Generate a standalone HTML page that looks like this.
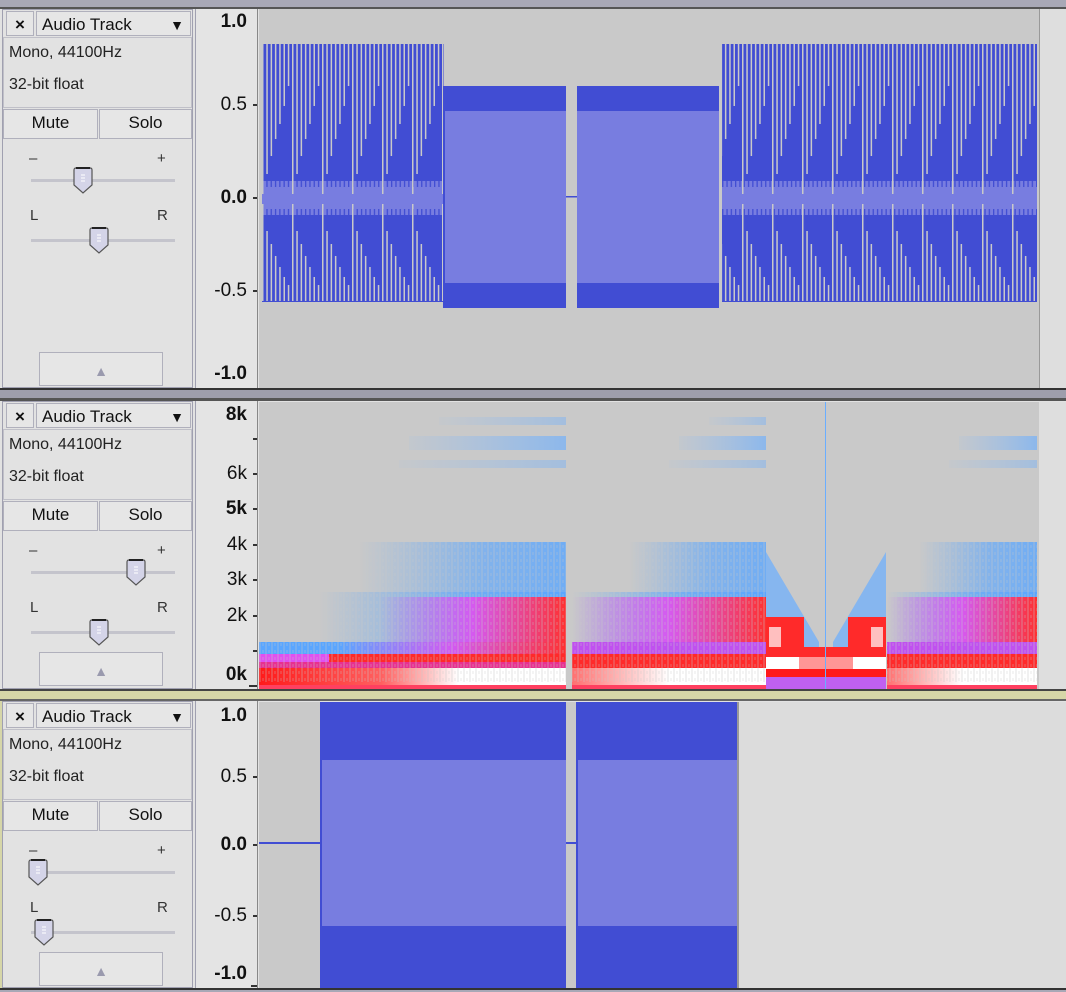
<!DOCTYPE html>
<html><head><meta charset="utf-8"><style>
*{margin:0;padding:0;box-sizing:border-box}
body{width:1066px;height:992px;background:#a8a8b6;position:relative;overflow:hidden;font-family:"Liberation Sans",sans-serif;color:#111}
.abs{position:absolute}
.panel{position:absolute;left:2px;width:191px;background:#e2e2e2;border:1px solid #a0a0b0}
.btn{position:absolute;background:#e6e6e6;border:1px solid #b0b0bc;font-size:17px;text-align:center;line-height:26px}
.info{position:absolute;left:6px;font-size:16px;color:#222}
.ibox{position:absolute;left:0;top:27px;width:189px;height:71px;border:1px solid #c0c0c8}
.ruler{position:absolute;left:195px;width:63px;background:#e4e4e4;border-left:1px solid #a0a0b0;border-right:1px solid #888}
.lab{position:absolute;right:10px;font-size:19px;line-height:20px}
.b{font-weight:bold}
.tick{position:absolute;right:0;width:4px;height:2px;background:#333}
.sl{position:absolute;left:28px;width:144px;height:3px;background:#c4c4cc}
.sym{position:absolute;font-size:15px;color:#333}
</style></head><body>
<div class="abs" style="left:0;top:7px;width:1066px;height:2px;background:#555"></div>

<!-- TRACK 1 -->
<div class="abs" style="left:0;top:9px;width:1066px;height:379px;background:#e2e2e2"></div>
<div class="panel" style="top:9px;height:379px">
 <div class="btn" style="left:3px;top:1px;width:28px;height:25px;font-weight:bold">×</div>
 <div class="btn" style="left:33px;top:1px;width:155px;height:25px;text-align:left;padding-left:5px">Audio Track<span style="position:absolute;right:6px;top:0;font-size:14px">▼</span></div>
 <div class="ibox"></div>
 <div class="info" style="top:34px">Mono, 44100Hz</div>
 <div class="info" style="top:66px">32-bit float</div>
 <div class="btn" style="left:0;top:99px;width:95px;height:30px">Mute</div>
 <div class="btn" style="left:96px;top:99px;width:93px;height:30px">Solo</div>
 <div class="sym" style="left:26px;top:140px">–</div><div class="sym" style="left:154px;top:140px">+</div>
 <div class="sl" style="top:169px"></div>
 <svg class="abs" style="left:69px;top:157px" width="22" height="28"><path d="M2 3 Q2 1 4 1 H18 Q20 1 20 3 V18 L11 26 L2 18 Z" fill="#d4d4e8" stroke="#555" stroke-width="1.2"/><path d="M4 1 H18" stroke="#222" stroke-width="2"/><path d="M9 8h4M9 11h4M9 14h4" stroke="#fff"/></svg>
 <div class="sym" style="left:27px;top:197px">L</div><div class="sym" style="left:154px;top:197px">R</div>
 <div class="sl" style="top:229px"></div>
 <svg class="abs" style="left:85px;top:217px" width="22" height="28"><path d="M2 3 Q2 1 4 1 H18 Q20 1 20 3 V18 L11 26 L2 18 Z" fill="#d4d4e8" stroke="#555" stroke-width="1.2"/><path d="M4 1 H18" stroke="#222" stroke-width="2"/><path d="M9 8h4M9 11h4M9 14h4" stroke="#fff"/></svg>
 <div class="btn" style="left:36px;top:342px;width:124px;height:34px;color:#9a9aae;font-size:14px;line-height:36px">▲</div>
</div>
<div class="ruler" style="top:9px;height:379px">
 <div class="lab b" style="top:3px">1.0</div>
 <div class="lab" style="top:86px">0.5</div><div class="tick" style="top:95px"></div>
 <div class="lab b" style="top:179px">0.0</div><div class="tick" style="top:188px"></div>
 <div class="lab" style="top:272px">-0.5</div><div class="tick" style="top:281px"></div>
 <div class="lab b" style="top:355px">-1.0</div>
</div>
<svg class="abs" style="left:259px;top:9px" width="807" height="379">
 <defs>
  <pattern id="pz" patternUnits="userSpaceOnUse" x="3" y="0" width="30" height="379">
   <g fill="#c9c9c9">
    <rect x="0" y="35" width="1.5" height="150"/><rect x="4.3" y="35" width="1.5" height="130"/><rect x="8.6" y="35" width="1.5" height="112"/><rect x="12.9" y="35" width="1.5" height="95"/><rect x="17.2" y="35" width="1.5" height="80"/><rect x="21.5" y="35" width="1.5" height="62"/><rect x="25.8" y="35" width="1.5" height="42"/>
    <rect x="0" y="195" width="1.5" height="97"/><rect x="4.3" y="222" width="1.5" height="70"/><rect x="8.6" y="235" width="1.5" height="57"/><rect x="12.9" y="247" width="1.5" height="45"/><rect x="17.2" y="258" width="1.5" height="34"/><rect x="21.5" y="268" width="1.5" height="24"/><rect x="25.8" y="276" width="1.5" height="16"/>
   </g>
  </pattern>
  <pattern id="pc" patternUnits="userSpaceOnUse" x="3" y="0" width="4.3" height="379">
   <rect x="0" y="172" width="1.3" height="6" fill="#414dd3"/><rect x="0" y="200" width="1.3" height="6" fill="#414dd3"/>
  </pattern>
 </defs>
 <rect width="780" height="379" fill="#c9c9c9"/>
 <rect x="781" width="26" height="379" fill="#dedede"/>
 <rect x="780" width="1" height="379" fill="#999"/>
 <rect x="3" y="35" width="182" height="258" fill="#414dd3"/>
 <rect x="3" y="172" width="182" height="34" fill="#787de0"/>
 <rect x="3" y="0" width="182" height="379" fill="url(#pc)"/>
 <rect x="3" y="0" width="182" height="379" fill="url(#pz)"/>
 <rect x="463" y="35" width="315" height="258" fill="#414dd3"/>
 <rect x="463" y="172" width="315" height="34" fill="#787de0"/>
 <rect x="463" y="0" width="315" height="379" fill="url(#pc)"/>
 <rect x="463" y="0" width="315" height="379" fill="url(#pz)"/>
 <rect x="184" y="77" width="123" height="222" fill="#414dd3"/>
 <rect x="186" y="102" width="121" height="172" fill="#787de0"/>
 <rect x="318" y="77" width="142" height="222" fill="#414dd3"/>
 <rect x="318" y="102" width="142" height="172" fill="#787de0"/>
 <rect x="307" y="187" width="11" height="1.5" fill="#414dd3"/>
</svg>

<div class="abs" style="left:0;top:388px;width:1066px;height:2px;background:#333"></div>
<div class="abs" style="left:0;top:390px;width:1066px;height:8px;background:#9e9eac"></div>
<div class="abs" style="left:0;top:398px;width:1066px;height:3px;background:#555"></div>

<!-- TRACK 2 -->
<div class="abs" style="left:0;top:401px;width:1066px;height:288px;background:#e2e2e2"></div>
<div class="panel" style="top:401px;height:288px">
 <div class="btn" style="left:3px;top:1px;width:28px;height:25px;font-weight:bold">×</div>
 <div class="btn" style="left:33px;top:1px;width:155px;height:25px;text-align:left;padding-left:5px">Audio Track<span style="position:absolute;right:6px;top:0;font-size:14px">▼</span></div>
 <div class="ibox"></div>
 <div class="info" style="top:34px">Mono, 44100Hz</div>
 <div class="info" style="top:66px">32-bit float</div>
 <div class="btn" style="left:0;top:99px;width:95px;height:30px">Mute</div>
 <div class="btn" style="left:96px;top:99px;width:93px;height:30px">Solo</div>
 <div class="sym" style="left:26px;top:140px">–</div><div class="sym" style="left:154px;top:140px">+</div>
 <div class="sl" style="top:169px"></div>
 <svg class="abs" style="left:122px;top:157px" width="22" height="28"><path d="M2 3 Q2 1 4 1 H18 Q20 1 20 3 V18 L11 26 L2 18 Z" fill="#d4d4e8" stroke="#555" stroke-width="1.2"/><path d="M4 1 H18" stroke="#222" stroke-width="2"/><path d="M9 8h4M9 11h4M9 14h4" stroke="#fff"/></svg>
 <div class="sym" style="left:27px;top:197px">L</div><div class="sym" style="left:154px;top:197px">R</div>
 <div class="sl" style="top:229px"></div>
 <svg class="abs" style="left:85px;top:217px" width="22" height="28"><path d="M2 3 Q2 1 4 1 H18 Q20 1 20 3 V18 L11 26 L2 18 Z" fill="#d4d4e8" stroke="#555" stroke-width="1.2"/><path d="M4 1 H18" stroke="#222" stroke-width="2"/><path d="M9 8h4M9 11h4M9 14h4" stroke="#fff"/></svg>
 <div class="btn" style="left:36px;top:250px;width:124px;height:34px;color:#9a9aae;font-size:14px;line-height:36px">▲</div>
</div>
<div class="ruler" style="top:401px;height:288px">
 <div class="lab b" style="top:4px">8k</div>
 <div class="tick" style="top:37px"></div>
 <div class="lab" style="top:63px">6k</div><div class="tick" style="top:72px"></div>
 <div class="lab b" style="top:98px">5k</div><div class="tick" style="top:107px"></div>
 <div class="lab" style="top:134px">4k</div><div class="tick" style="top:143px"></div>
 <div class="lab" style="top:169px">3k</div><div class="tick" style="top:178px"></div>
 <div class="lab" style="top:205px">2k</div><div class="tick" style="top:214px"></div>
 <div class="tick" style="top:249px"></div>
 <div class="lab b" style="top:264px">0k</div><div class="tick" style="top:284px;width:8px"></div>
</div>
<svg class="abs" style="left:259px;top:402px" width="807" height="287">
 <defs>
  <linearGradient id="fadeL" x1="0" x2="1"><stop offset="0" stop-color="#5aa6ff" stop-opacity="0"/><stop offset="0.6" stop-color="#5aa6ff" stop-opacity="0.8"/><stop offset="1" stop-color="#5aa6ff"/></linearGradient>
  <linearGradient id="magL" x1="0" x2="1"><stop offset="0" stop-color="#e050f0" stop-opacity="0"/><stop offset="0.5" stop-color="#e050f0" stop-opacity="0.9"/><stop offset="1" stop-color="#ff3030"/></linearGradient>
  <linearGradient id="rw" x1="0" x2="1"><stop offset="0" stop-color="#ff1a1a"/><stop offset="0.4" stop-color="#ff6060"/><stop offset="0.65" stop-color="#fff"/><stop offset="1" stop-color="#fff"/></linearGradient>
  <linearGradient id="rw2" x1="0" x2="1"><stop offset="0" stop-color="#ff7070"/><stop offset="0.5" stop-color="#fff"/><stop offset="1" stop-color="#fff"/></linearGradient>
  <linearGradient id="bl" x1="0" x2="1"><stop offset="0" stop-color="#7fb8ff" stop-opacity="0.1"/><stop offset="1" stop-color="#6aaeff" stop-opacity="0.8"/></linearGradient>
  <pattern id="nz" patternUnits="userSpaceOnUse" width="6" height="7"><rect width="2" height="7" fill="#c9c9c9" opacity="0.25"/><rect x="3" y="3" width="2" height="3" fill="#c9c9c9" opacity="0.2"/></pattern>
 </defs>
 <rect width="780" height="287" fill="#c9c9c9"/>
 <rect x="780" width="27" height="287" fill="#dedede"/>
 <rect x="180" y="15" width="127" height="8" fill="url(#bl)" opacity="0.5"/>
 <rect x="150" y="34" width="157" height="14" fill="url(#bl)" opacity="0.8"/>
 <rect x="140" y="58" width="167" height="8" fill="url(#bl)" opacity="0.5"/>
 <rect x="100" y="140" width="207" height="50" fill="url(#fadeL)" opacity="0.8"/>
 <rect x="60" y="190" width="247" height="50" fill="url(#fadeL)"/>
 <rect x="120" y="195" width="187" height="50" fill="url(#magL)"/>
 <rect x="0" y="240" width="307" height="12" fill="#5aa6ff"/>
 <rect x="80" y="240" width="227" height="12" fill="url(#magL)"/>
 <rect x="0" y="252" width="307" height="8" fill="#e050f0"/>
 <rect x="70" y="252" width="237" height="8" fill="#ff2a2a"/>
 <rect x="0" y="260" width="307" height="6" fill="#e83090"/>
 <rect x="0" y="266" width="307" height="17" fill="url(#rw)"/>
 <rect x="0" y="283" width="307" height="4" fill="#ff4060"/>
 <rect x="0" y="130" width="307" height="150" fill="url(#nz)"/>
 <rect x="450" y="15" width="57" height="8" fill="url(#bl)" opacity="0.5"/>
 <rect x="420" y="34" width="87" height="14" fill="url(#bl)" opacity="0.8"/>
 <rect x="410" y="58" width="97" height="8" fill="url(#bl)" opacity="0.5"/>
 <rect x="370" y="140" width="137" height="50" fill="url(#fadeL)" opacity="0.8"/>
 <rect x="313" y="190" width="194" height="50" fill="url(#fadeL)"/>
 <rect x="313" y="195" width="194" height="50" fill="url(#magL)"/>
 <rect x="313" y="240" width="194" height="12" fill="#c050f0"/>
 <rect x="313" y="252" width="194" height="14" fill="#ff2a2a"/>
 <rect x="313" y="266" width="194" height="17" fill="url(#rw2)"/>
 <rect x="313" y="283" width="194" height="4" fill="#ff4060"/>
 <rect x="313" y="130" width="194" height="150" fill="url(#nz)"/>
 <path d="M507 150 L560 240 L560 287 L507 287 Z" fill="#6aaeff" opacity="0.7"/>
 <path d="M627 150 L574 240 L574 287 L627 287 Z" fill="#6aaeff" opacity="0.7"/>
 <rect x="507" y="215" width="38" height="40" fill="#ff2a2a"/>
 <rect x="589" y="215" width="38" height="40" fill="#ff2a2a"/>
 <rect x="510" y="225" width="12" height="30" fill="#fff" opacity="0.7"/>
 <rect x="612" y="225" width="12" height="30" fill="#fff" opacity="0.7"/>
 <rect x="507" y="245" width="120" height="10" fill="#ff2a2a"/>
 <rect x="507" y="255" width="120" height="12" fill="#fff"/>
 <rect x="540" y="255" width="54" height="12" fill="#ff5050" opacity="0.6"/>
 <rect x="507" y="267" width="120" height="8" fill="#ff1a1a"/>
 <rect x="507" y="275" width="120" height="12" fill="#c060f0"/>
 <rect x="566" y="0" width="1" height="287" fill="#6aaeff"/>
 <rect x="700" y="34" width="78" height="14" fill="url(#bl)" opacity="0.8"/>
 <rect x="690" y="58" width="88" height="8" fill="url(#bl)" opacity="0.5"/>
 <rect x="660" y="140" width="118" height="50" fill="url(#fadeL)" opacity="0.8"/>
 <rect x="628" y="190" width="150" height="50" fill="url(#fadeL)"/>
 <rect x="628" y="195" width="150" height="50" fill="url(#magL)"/>
 <rect x="628" y="240" width="150" height="12" fill="#c050f0"/>
 <rect x="628" y="252" width="150" height="14" fill="#ff2a2a"/>
 <rect x="628" y="266" width="150" height="17" fill="url(#rw2)"/>
 <rect x="628" y="283" width="150" height="4" fill="#ff4060"/>
 <rect x="628" y="130" width="150" height="150" fill="url(#nz)"/>
</svg>

<div class="abs" style="left:0;top:689px;width:1066px;height:2px;background:#444"></div>
<div class="abs" style="left:0;top:691px;width:1066px;height:8px;background:#d6d6a8"></div>
<div class="abs" style="left:0;top:699px;width:1066px;height:2px;background:#666"></div>

<!-- TRACK 3 -->
<div class="abs" style="left:0;top:701px;width:1066px;height:287px;background:#e2e2e2;border-left:2px solid #d6d6a8"></div>
<div class="panel" style="top:701px;height:287px">
 <div class="btn" style="left:3px;top:1px;width:28px;height:25px;font-weight:bold">×</div>
 <div class="btn" style="left:33px;top:1px;width:155px;height:25px;text-align:left;padding-left:5px">Audio Track<span style="position:absolute;right:6px;top:0;font-size:14px">▼</span></div>
 <div class="ibox"></div>
 <div class="info" style="top:34px">Mono, 44100Hz</div>
 <div class="info" style="top:66px">32-bit float</div>
 <div class="btn" style="left:0;top:99px;width:95px;height:30px">Mute</div>
 <div class="btn" style="left:96px;top:99px;width:93px;height:30px">Solo</div>
 <div class="sym" style="left:26px;top:140px">–</div><div class="sym" style="left:154px;top:140px">+</div>
 <div class="sl" style="top:169px"></div>
 <svg class="abs" style="left:24px;top:157px" width="22" height="28"><path d="M2 3 Q2 1 4 1 H18 Q20 1 20 3 V18 L11 26 L2 18 Z" fill="#d4d4e8" stroke="#555" stroke-width="1.2"/><path d="M4 1 H18" stroke="#222" stroke-width="2"/><path d="M9 8h4M9 11h4M9 14h4" stroke="#fff"/></svg>
 <div class="sym" style="left:27px;top:197px">L</div><div class="sym" style="left:154px;top:197px">R</div>
 <div class="sl" style="top:229px"></div>
 <svg class="abs" style="left:30px;top:217px" width="22" height="28"><path d="M2 3 Q2 1 4 1 H18 Q20 1 20 3 V18 L11 26 L2 18 Z" fill="#d4d4e8" stroke="#555" stroke-width="1.2"/><path d="M4 1 H18" stroke="#222" stroke-width="2"/><path d="M9 8h4M9 11h4M9 14h4" stroke="#fff"/></svg>
 <div class="btn" style="left:36px;top:250px;width:124px;height:34px;color:#9a9aae;font-size:14px;line-height:36px">▲</div>
</div>
<div class="ruler" style="top:701px;height:287px">
 <div class="lab b" style="top:5px">1.0</div>
 <div class="lab" style="top:66px">0.5</div><div class="tick" style="top:75px"></div>
 <div class="lab b" style="top:134px">0.0</div><div class="tick" style="top:143px"></div>
 <div class="lab" style="top:205px">-0.5</div><div class="tick" style="top:214px"></div>
 <div class="lab b" style="top:263px">-1.0</div><div class="tick" style="top:284px;width:6px"></div>
</div>
<svg class="abs" style="left:259px;top:702px" width="807" height="286">
 <rect width="807" height="286" fill="#dcdcdc"/>
 <rect width="479" height="286" fill="#c9c9c9"/>
 <rect x="0" y="140" width="61" height="2" fill="#414dd3"/>
 <rect x="61" y="0" width="246" height="286" fill="#414dd3"/>
 <rect x="63" y="58" width="244" height="166" fill="#787de0"/>
 <rect x="307" y="140" width="10" height="2" fill="#414dd3"/>
 <rect x="317" y="0" width="161" height="286" fill="#414dd3"/>
 <rect x="319" y="58" width="159" height="166" fill="#787de0"/>
 <rect x="478" y="0" width="2" height="286" fill="#999"/>
</svg>
<div class="abs" style="left:0;top:988px;width:1066px;height:2px;background:#333"></div>
<div class="abs" style="left:0;top:990px;width:1066px;height:2px;background:#a8a8b6"></div>
</body></html>
